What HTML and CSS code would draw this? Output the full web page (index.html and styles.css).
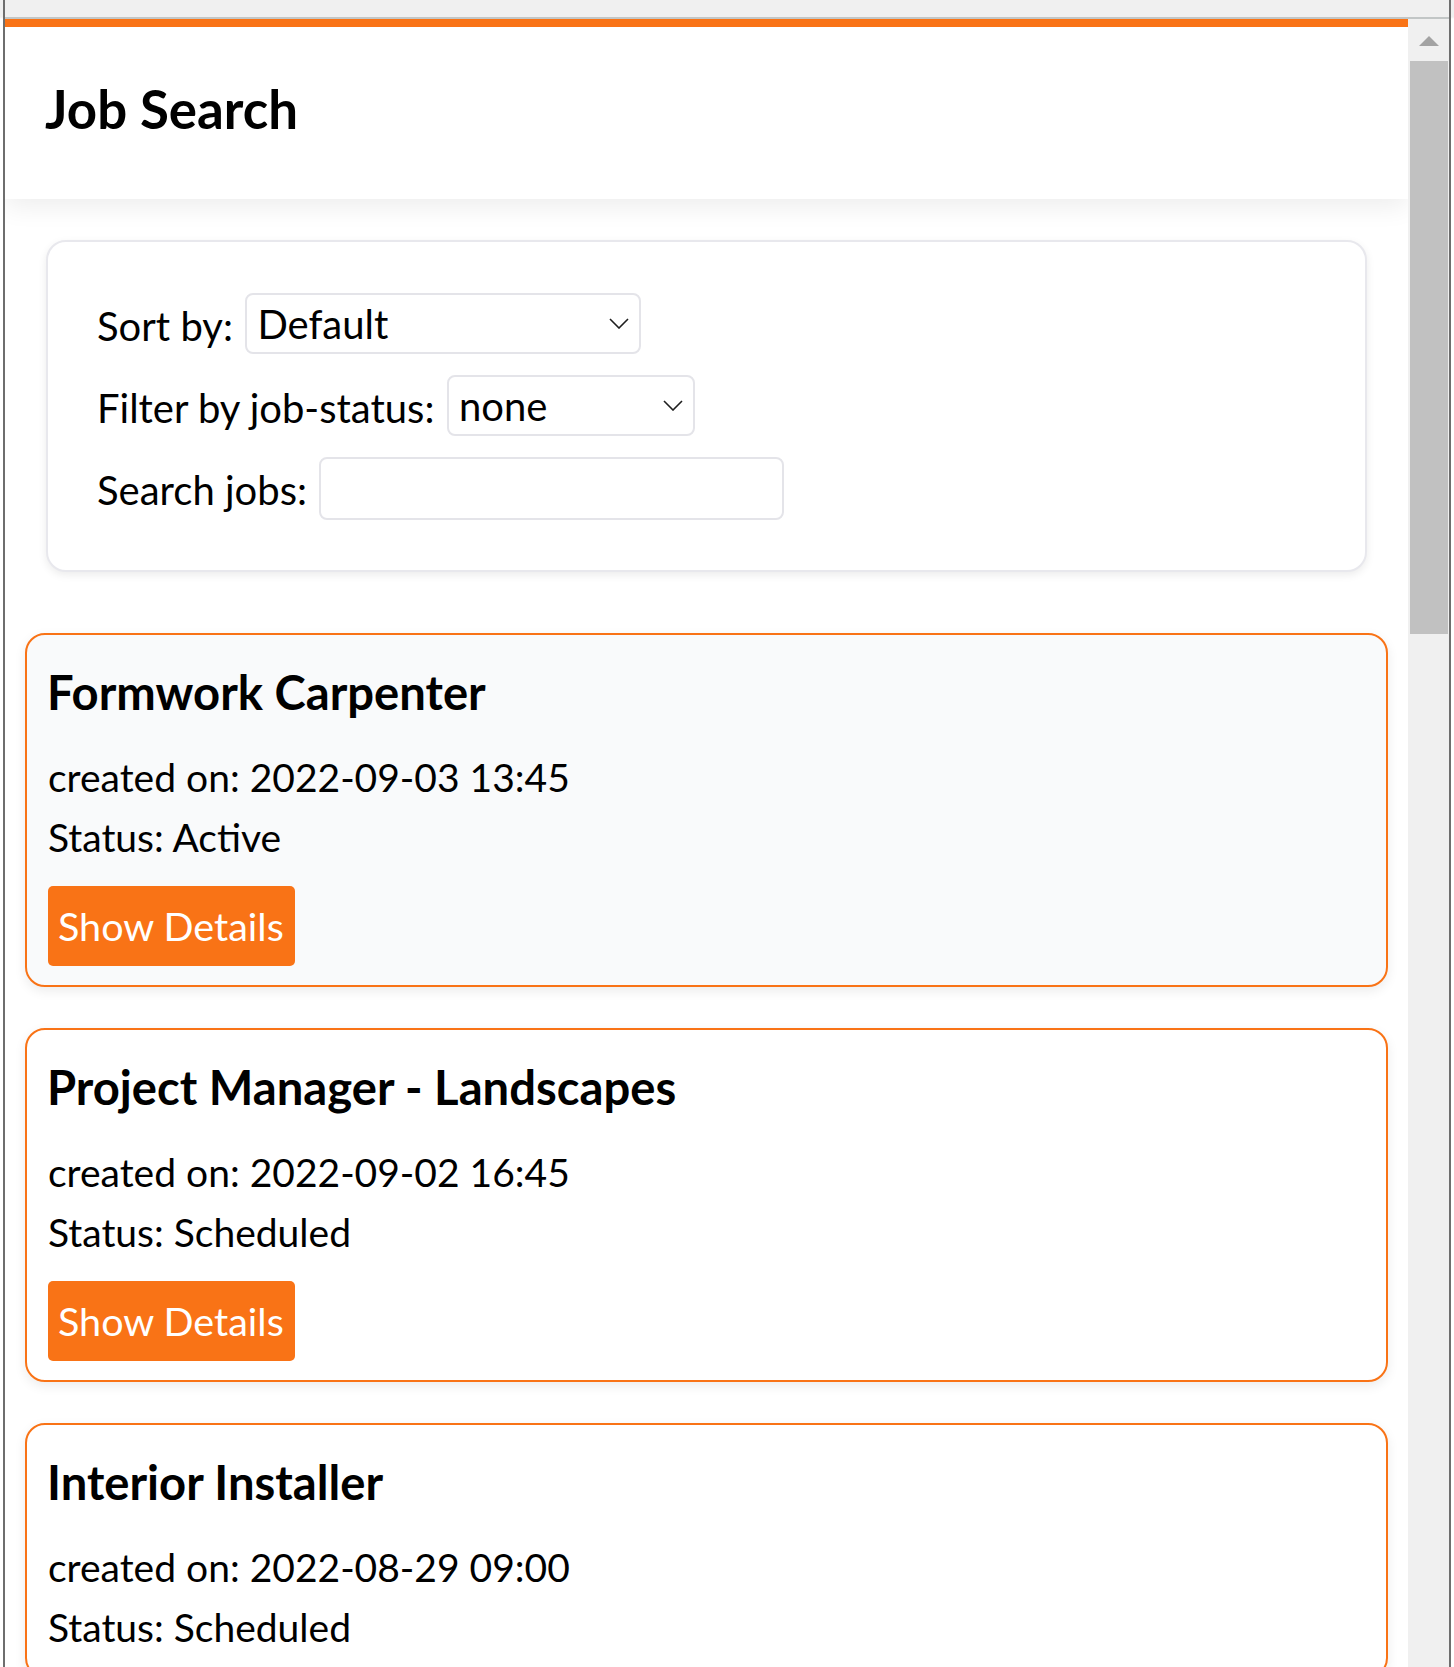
FILE: index.html
```html
<!DOCTYPE html>
<html lang="en">
<head>
<meta charset="utf-8">
<title>Job Search</title>
<link rel="stylesheet" href="styles.css">
</head>
<body>
<div class="screen">
  <div class="side"></div>
  <div class="edge"></div>
  <div class="window">
    <div class="titlebar"></div>
    <div class="window-body">
      <div class="viewport">
        <header class="app-header">
          <h1 class="app-title">Job Search</h1>
        </header>
        <main class="main">
          <section class="filters">
            <div class="filter-row">
              <label class="filter-label" for="sort">Sort by:</label>
              <span class="select-wrap">
                <select id="sort" class="control select select-sort"><option>Default</option></select>
                <svg class="chevron" viewBox="0 0 20 11" width="20" height="11"><polyline points="1,1 10,10 19,1"/></svg>
              </span>
            </div>
            <div class="filter-row">
              <label class="filter-label" for="status">Filter by job-status:</label>
              <span class="select-wrap">
                <select id="status" class="control select select-status"><option>none</option></select>
                <svg class="chevron" viewBox="0 0 20 11" width="20" height="11"><polyline points="1,1 10,10 19,1"/></svg>
              </span>
            </div>
            <div class="filter-row filter-row--last">
              <label class="filter-label" for="search">Search jobs:</label>
              <input id="search" class="control search-input" type="text">
            </div>
          </section>

          <article class="job-card job-card--hover">
            <h3 class="job-title">Formwork Carpenter</h3>
            <p class="job-line">created on: 2022-09-03 13:45</p>
            <p class="job-line">Status: Active</p>
            <button class="details-btn" type="button">Show Details</button>
          </article>

          <article class="job-card">
            <h3 class="job-title">Project Manager - Landscapes</h3>
            <p class="job-line">created on: 2022-09-02 16:45</p>
            <p class="job-line">Status: Scheduled</p>
            <button class="details-btn" type="button">Show Details</button>
          </article>

          <article class="job-card">
            <h3 class="job-title">Interior Installer</h3>
            <p class="job-line">created on: 2022-08-29 09:00</p>
            <p class="job-line">Status: Scheduled</p>
          </article>
        </main>
      </div>
      <div class="scrollbar">
        <div class="scroll-arrow"><span class="arrow-up"></span></div>
        <div class="scroll-thumb"></div>
      </div>
    </div>
  </div>
  <div class="edge"></div>
  <div class="side"></div>
</div>
</body>
</html>
```
FILE: styles.css
```css
* { box-sizing: border-box; }

html, body {
  margin: 0;
  padding: 0;
  height: 1667px;
  overflow: hidden;
  background: #ffffff;
  font-family: "Lato", "Noto Sans", sans-serif;
  color: #000;
}

.screen {
  display: flex;
  height: 1667px;
  width: 1454px;
  overflow: hidden;
}

.side {
  width: 3px;
  flex: none;
  background: linear-gradient(#f0f0f0 0, #f0f0f0 17px, #ffffff 19px, #ffffff 100%);
}

.edge {
  width: 2px;
  flex: none;
  background: #6e6e6e;
}

.window {
  flex: 1;
  display: flex;
  flex-direction: column;
  min-width: 0;
  height: 100%;
}

.titlebar {
  height: 19px;
  flex: none;
  background: #f0f0f0;
  border-bottom: 2px solid #c2c6c6;
}

.window-body {
  flex: 1;
  display: flex;
  min-height: 0;
}

.viewport {
  flex: 1;
  min-width: 0;
  overflow: hidden;
  background: #ffffff;
}

/* header */
.app-header {
  position: relative;
  z-index: 1;
  background: #ffffff;
  border-top: 8px solid #f97316;
  padding: 50px 40px 58px 40px;
  box-shadow: 0 8px 24px rgba(0, 0, 0, 0.07);
}

.app-title {
  margin: 0;
  font-size: 52.8px;
  line-height: 64px;
  font-weight: 700;
}

/* main */
.main {
  padding: 41px 20px 0;
}

.filters {
  margin: 0 21px 61px;
  padding: 51px 51px 50px 49px;
  background: #ffffff;
  border: 2px solid #e8e8ed;
  border-radius: 20px;
  box-shadow: 0 3px 9px rgba(0, 0, 0, 0.08);
}

.filter-row {
  display: flex;
  align-items: flex-start;
  gap: 12.5px;
  margin-bottom: 21px;
}

.filter-row--last { margin-bottom: 0; }

.filter-label {
  font-size: 40px;
  line-height: 56px;
  padding-top: 5px;
  white-space: nowrap;
}

.select-wrap {
  position: relative;
  display: block;
}

.control {
  display: block;
  margin: 0;
  font-family: "Lato", "Noto Sans", sans-serif;
  font-size: 40px;
  color: #000;
  background: #ffffff;
  border: 2px solid #e4e4e9;
  border-radius: 8px;
  outline: none;
}

.select {
  -webkit-appearance: none;
  appearance: none;
  height: 61px;
  padding: 0 40px 0 10px;
}

.select-sort { width: 396px; }
.select-status { width: 248px; }

.chevron {
  position: absolute;
  right: 12px;
  top: 25px;
  pointer-events: none;
  fill: none;
  stroke: #1e1e1e;
  stroke-width: 1.6;
}

.search-input {
  width: 465px;
  height: 63px;
  padding: 0 10px;
}

/* job cards */
.job-card {
  margin-bottom: 41px;
  padding: 29px 21px 19px;
  background: #ffffff;
  border: 2px solid #f97316;
  border-radius: 20px;
  box-shadow: 0 4px 12px rgba(0, 0, 0, 0.08);
}

.job-card--hover { background: #f9fafb; }

.job-title {
  margin: 0 0 27px -1px;
  font-size: 47.2px;
  line-height: 56px;
  font-weight: 700;
}

.job-line {
  margin: 0;
  font-size: 39px;
  line-height: 60px;
}

.details-btn {
  display: block;
  margin-top: 19px;
  height: 80px;
  padding: 0 11px 0 10px;
  font-family: "Lato", "Noto Sans", sans-serif;
  font-size: 39.5px;
  line-height: 80px;
  color: #ffffff;
  background: #f97316;
  border: none;
  border-radius: 5px;
}

/* scrollbar */
.scrollbar {
  width: 41px;
  flex: none;
  background: #f0f0f0;
  padding: 0 1px 0 2px;
  display: flex;
  flex-direction: column;
}

.scroll-arrow {
  height: 42px;
  display: flex;
  justify-content: center;
  padding-top: 17px;
}

.arrow-up {
  width: 0;
  height: 0;
  border-left: 10px solid transparent;
  border-right: 10px solid transparent;
  border-bottom: 10px solid #a3a3a3;
}

.scroll-thumb {
  height: 573px;
  background: #c1c1c1;
}
```
